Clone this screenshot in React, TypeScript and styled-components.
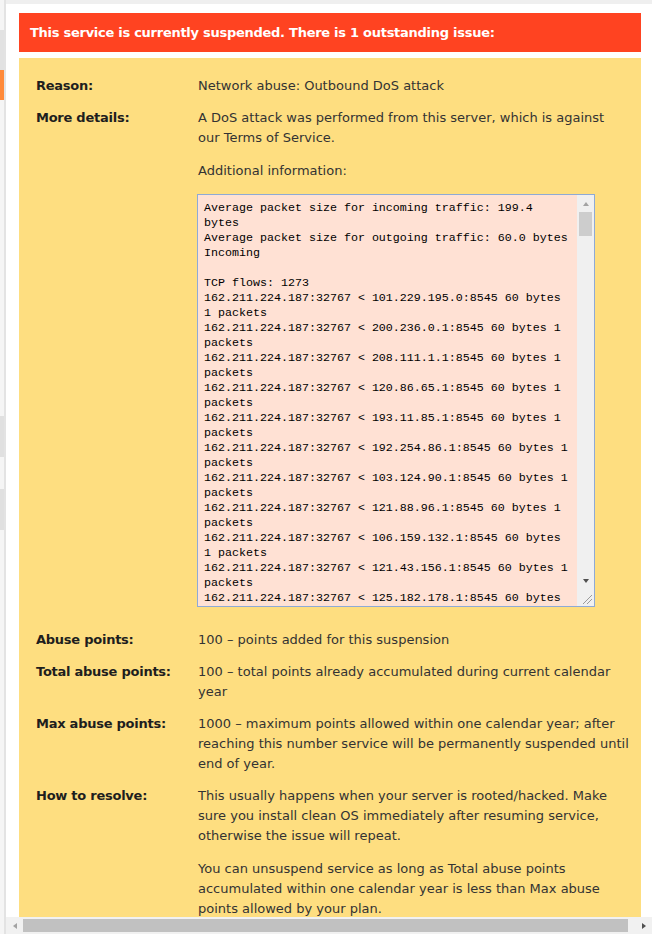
import React from "react";
import styled, { createGlobalStyle } from "styled-components";

const GlobalStyle = createGlobalStyle`
  html, body { margin: 0; padding: 0; background: #fff; }
  body { font-family: "DejaVu Sans", Verdana, sans-serif; }
`;

const Page = styled.div`
  display: flex;
  width: 652px;
  height: 934px;
  overflow: hidden;
`;

const Sidebar = styled.div`
  width: 4px;
  flex: none;
  display: flex;
  flex-direction: column;
  background: #f5f5f5;
  border-right: 2px solid #e3e3e3;
`;

const SideSeg = styled.div<{ $h: number; $c: string }>`
  flex: none;
  height: ${(p) => p.$h}px;
  background: ${(p) => p.$c};
`;

const Main = styled.div`
  flex: 1;
  min-width: 0;
  display: flex;
  flex-direction: column;
  border-top: 4px solid #efefef;
`;

const Content = styled.div`
  flex: 1;
  min-height: 0;
  overflow: hidden;
  padding: 9px 11px 0 13px;
`;

const Banner = styled.div`
  height: 39px;
  line-height: 39px;
  padding-left: 11px;
  background: #ff4321;
  color: #fff;
  font-weight: bold;
  font-size: 13px;
  letter-spacing: -0.27px;
  white-space: nowrap;
`;

const Panel = styled.div`
  margin-top: 6px;
  background: #fede80;
  padding: 18px 16px 40px 17px;
  display: grid;
  grid-template-columns: 162px 1fr;
  row-gap: 12px;
  font-size: 13px;
  line-height: 20px;
`;

const Label = styled.div`
  font-weight: bold;
  color: #1e1e1e;
  letter-spacing: -0.25px;
  white-space: nowrap;
`;

const Value = styled.div`
  color: #333;
  display: flex;
  flex-direction: column;
  gap: 13px;
  min-width: 0;
`;

const Para = styled.div``;

const Line = styled.span`
  display: block;
  white-space: nowrap;
`;

const LogBox = styled.div`
  box-sizing: border-box;
  width: 398px;
  height: 413px;
  margin-left: -1px;
  border: 1px solid #8eaad6;
  background: #ffe1d4;
  display: flex;
  margin-bottom: 11px;
`;

const LogText = styled.div`
  flex: 1;
  min-width: 0;
  overflow: hidden;
  padding: 6px 5px 0 6px;
  font-family: "Liberation Mono", "DejaVu Sans Mono", monospace;
  font-size: 11.67px;
  line-height: 15px;
  white-space: pre;
  color: #000;
`;

const VScroll = styled.div`
  width: 17px;
  flex: none;
  background: #f0f0f0;
  display: flex;
  flex-direction: column;
`;

const ScrollBtn = styled.div`
  flex: none;
  width: 17px;
  height: 17px;
  display: flex;
  align-items: center;
  justify-content: center;
`;

const VThumb = styled.div`
  flex: none;
  height: 24px;
  margin: 0 2px;
  background: #cdcdcd;
`;

const Spacer = styled.div`
  flex: 1;
`;

const HScroll = styled.div`
  flex: none;
  height: 17px;
  background: #f1f1f1;
  display: flex;
  align-items: center;
`;

const HThumb = styled.div`
  flex: none;
  width: 605px;
  height: 13px;
  background: #c1c1c1;
`;

const Arrow = ({ dir, color }: { dir: "up" | "down" | "left" | "right"; color: string }) => {
  const pts: Record<string, string> = {
    up: "1,6 4,2 7,6",
    down: "1,2 4,6 7,2",
    left: "6,1 2,4 6,7",
    right: "2,1 6,4 2,7",
  };
  return (
    <svg width="8" height="8" viewBox="0 0 8 8">
      <polygon points={pts[dir]} fill={color} />
    </svg>
  );
};

const Grip = () => (
  <svg width="17" height="17" viewBox="0 0 17 17">
    <line x1="15" y1="6" x2="6" y2="15" stroke="#9a9a9a" strokeWidth="1" />
    <line x1="15" y1="10" x2="10" y2="15" stroke="#9a9a9a" strokeWidth="1" />
  </svg>
);

const logLines = [
  "Average packet size for incoming traffic: 199.4",
  "bytes",
  "Average packet size for outgoing traffic: 60.0 bytes",
  "Incoming",
  "",
  "TCP flows: 1273",
  "162.211.224.187:32767 < 101.229.195.0:8545 60 bytes",
  "1 packets",
  "162.211.224.187:32767 < 200.236.0.1:8545 60 bytes 1",
  "packets",
  "162.211.224.187:32767 < 208.111.1.1:8545 60 bytes 1",
  "packets",
  "162.211.224.187:32767 < 120.86.65.1:8545 60 bytes 1",
  "packets",
  "162.211.224.187:32767 < 193.11.85.1:8545 60 bytes 1",
  "packets",
  "162.211.224.187:32767 < 192.254.86.1:8545 60 bytes 1",
  "packets",
  "162.211.224.187:32767 < 103.124.90.1:8545 60 bytes 1",
  "packets",
  "162.211.224.187:32767 < 121.88.96.1:8545 60 bytes 1",
  "packets",
  "162.211.224.187:32767 < 106.159.132.1:8545 60 bytes",
  "1 packets",
  "162.211.224.187:32767 < 121.43.156.1:8545 60 bytes 1",
  "packets",
  "162.211.224.187:32767 < 125.182.178.1:8545 60 bytes",
];

const sideSegs: [number, string][] = [
  [30, "#f5f5f5"],
  [40, "#e2e2e2"],
  [30, "#ff8a3a"],
  [316, "#f5f5f5"],
  [41, "#e0e0e0"],
  [32, "#f5f5f5"],
  [41, "#e0e0e0"],
];

const P = ({ lines }: { lines: string[] }) => (
  <Para>
    {lines.map((l, i) => (
      <Line key={i}>{l}</Line>
    ))}
  </Para>
);

export default function App() {
  return (
    <>
      <GlobalStyle />
      <Page>
        <Sidebar>
          {sideSegs.map(([h, c], i) => (
            <SideSeg key={i} $h={h} $c={c} />
          ))}
        </Sidebar>
        <Main>
          <Content>
            <Banner>This service is currently suspended. There is 1 outstanding issue:</Banner>
            <Panel>
              <Label>Reason:</Label>
              <Value>
                <P lines={["Network abuse: Outbound DoS attack"]} />
              </Value>

              <Label>More details:</Label>
              <Value>
                <P
                  lines={[
                    "A DoS attack was performed from this server, which is against",
                    "our Terms of Service.",
                  ]}
                />
                <P lines={["Additional information:"]} />
                <LogBox>
                  <LogText>{logLines.join("\n")}</LogText>
                  <VScroll>
                    <ScrollBtn>
                      <Arrow dir="up" color="#a3a3a3" />
                    </ScrollBtn>
                    <VThumb />
                    <Spacer />
                    <ScrollBtn>
                      <Arrow dir="down" color="#505050" />
                    </ScrollBtn>
                    <ScrollBtn>
                      <Grip />
                    </ScrollBtn>
                  </VScroll>
                </LogBox>
              </Value>

              <Label>Abuse points:</Label>
              <Value>
                <P lines={["100 – points added for this suspension"]} />
              </Value>

              <Label>Total abuse points:</Label>
              <Value>
                <P
                  lines={[
                    "100 – total points already accumulated during current calendar",
                    "year",
                  ]}
                />
              </Value>

              <Label>Max abuse points:</Label>
              <Value>
                <P
                  lines={[
                    "1000 – maximum points allowed within one calendar year; after",
                    "reaching this number service will be permanently suspended until",
                    "end of year.",
                  ]}
                />
              </Value>

              <Label>How to resolve:</Label>
              <Value>
                <P
                  lines={[
                    "This usually happens when your server is rooted/hacked. Make",
                    "sure you install clean OS immediately after resuming service,",
                    "otherwise the issue will repeat.",
                  ]}
                />
                <P
                  lines={[
                    "You can unsuspend service as long as Total abuse points",
                    "accumulated within one calendar year is less than Max abuse",
                    "points allowed by your plan.",
                  ]}
                />
              </Value>
            </Panel>
          </Content>
          <HScroll>
            <ScrollBtn>
              <Arrow dir="left" color="#a3a3a3" />
            </ScrollBtn>
            <HThumb />
            <Spacer />
            <ScrollBtn>
              <Arrow dir="right" color="#505050" />
            </ScrollBtn>
          </HScroll>
        </Main>
      </Page>
    </>
  );
}
